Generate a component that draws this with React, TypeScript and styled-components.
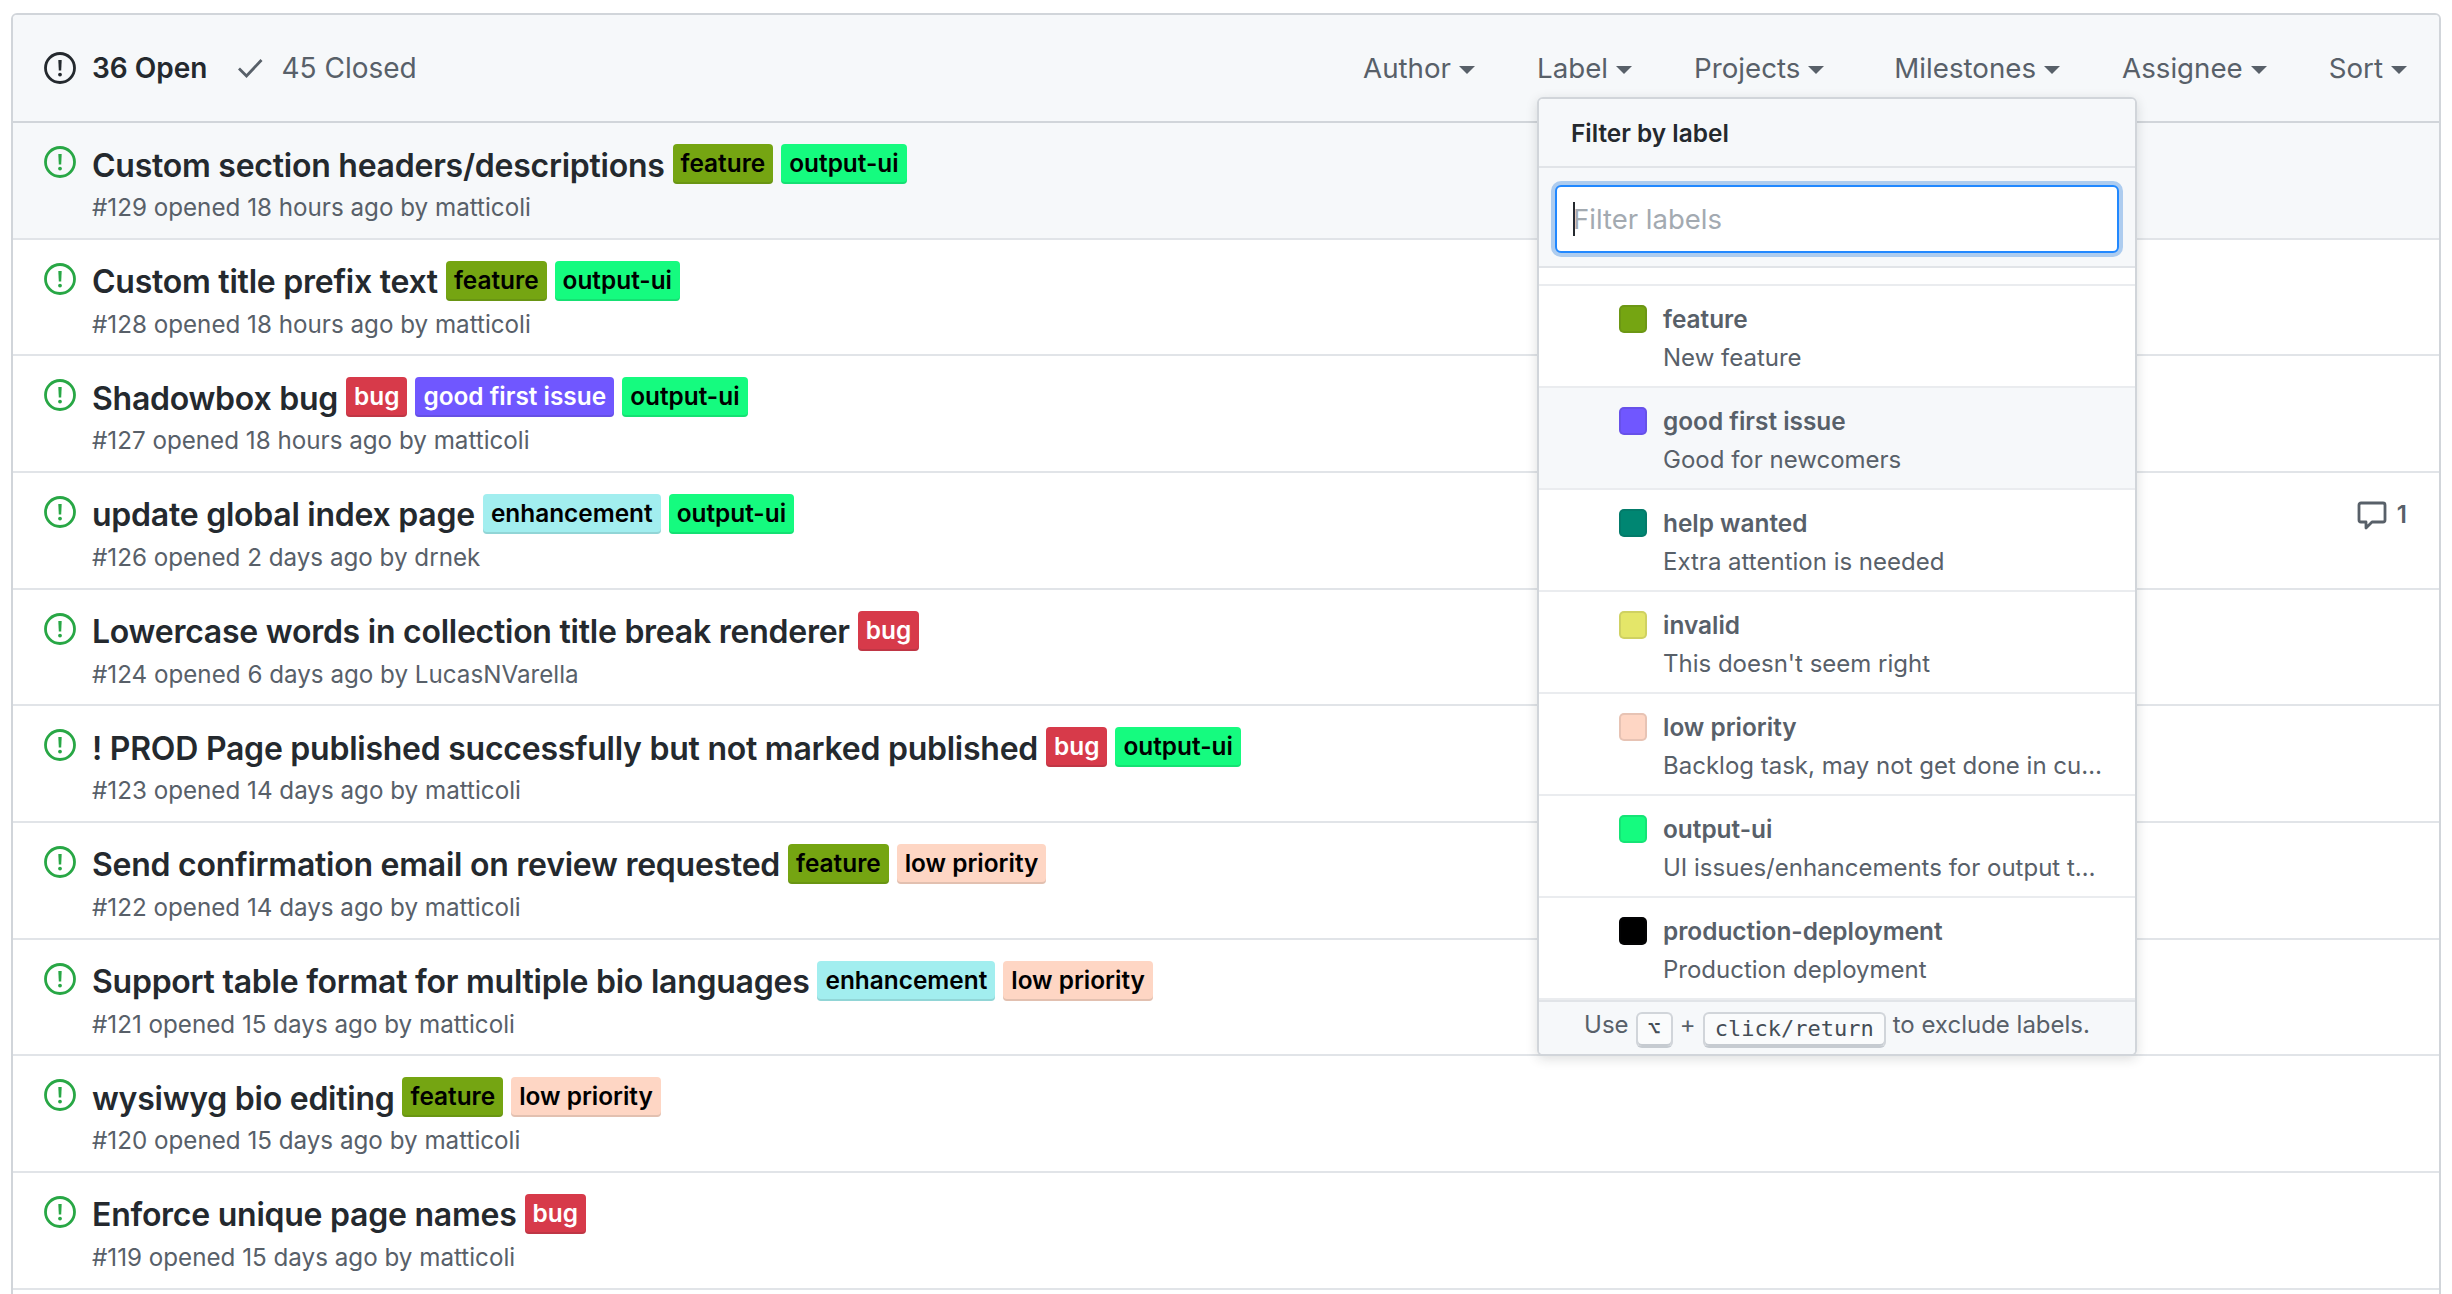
import React from "react";
import styled, { createGlobalStyle } from "styled-components";

const Global = createGlobalStyle`
  html, body { margin: 0; padding: 0; height: 1294px; overflow: hidden; background: #fff; }
  body { font-family: Inter, "Liberation Sans", sans-serif; color: #24292e; }
  #root { height: 100%; }
`;

const Page = styled.div`
  padding: 13px 11px 0;
  height: 100%;
  box-sizing: border-box;
`;

const Box = styled.div`
  position: relative;
  height: 1400px;
  border: 2px solid #d1d5da;
  border-radius: 6px 6px 0 0;
  box-sizing: border-box;
`;

const Header = styled.div`
  display: flex;
  align-items: center;
  justify-content: space-between;
  height: 106px;
  padding: 0 32px 0 31px;
  background: #f6f8fa;
  border-bottom: 2px solid #d1d5da;
  border-radius: 4px 4px 0 0;
  box-sizing: content-box;
`;

const States = styled.div`
  display: flex;
  align-items: center;
  font-size: 28px;
`;

const StateLink = styled.span<{ $active?: boolean }>`
  display: flex;
  align-items: center;
  font-weight: ${(p) => (p.$active ? 600 : 400)};
  color: ${(p) => (p.$active ? "#24292e" : "#586069")};
  margin-right: 30px;
  & svg { margin-right: 16px; }
`;

const Filters = styled.div`
  display: flex;
  align-items: center;
  gap: 62px;
  font-size: 27.7px;
  color: #586069;
`;

const Filter = styled.span<{ $extra?: boolean }>`
  display: flex;
  align-items: center;
  margin-left: ${(p) => (p.$extra ? "8px" : "0")};
`;

const Caret = styled.i`
  display: inline-block;
  width: 0;
  height: 0;
  margin-left: 8px;
  margin-top: 4px;
  border-style: solid;
  border-width: 8px 8px 0;
  border-color: #586069 transparent transparent;
`;

const Row = styled.div<{ $hover?: boolean }>`
  display: flex;
  height: 114.67px;
  border-bottom: 2px solid #e1e4e8;
  background: ${(p) => (p.$hover ? "#f6f8fa" : "#fff")};
  padding: 0 32px 0 31px;
  align-items: flex-start;
`;

const IssueIconWrap = styled.div`
  flex: none;
  width: 32px;
  margin-top: 23px;
  margin-right: 16px;
  line-height: 0;
`;

const RowMain = styled.div`
  flex: 1;
  min-width: 0;
  padding-top: 22px;
`;

const TitleLine = styled.div`
  display: flex;
  align-items: center;
  height: 40px;
`;

const Title = styled.span`
  font-size: 32px;
  font-weight: 600;
  letter-spacing: -0.25px;
  color: #24292e;
  margin-right: 8px;
  white-space: nowrap;
`;

const Tag = styled.span<{ $bg: string; $fg: string }>`
  display: inline-block;
  height: 40px;
  line-height: 38px;
  padding: 0 8px;
  margin-right: 8px;
  margin-top: -2px;
  font-size: 24.4px;
  font-weight: 600;
  border-radius: 4px;
  background: ${(p) => p.$bg};
  color: ${(p) => p.$fg};
  box-shadow: inset 0 -2px 0 rgba(27, 31, 35, 0.12);
  box-sizing: border-box;
`;

const Meta = styled.div`
  margin-top: 8px;
  font-size: 24.2px;
  line-height: 30px;
  color: #586069;
`;

const Comments = styled.div`
  flex: none;
  display: flex;
  align-items: center;
  gap: 10px;
  margin-top: 27px;
  font-size: 24px;
  font-weight: 600;
  color: #586069;
`;

const Menu = styled.div`
  position: absolute;
  left: 1524px;
  top: 82px;
  width: 600px;
  height: 959px;
  background: #fff;
  border: 2px solid #d1d5da;
  border-radius: 6px;
  box-shadow: 0 3px 12px rgba(27, 31, 35, 0.15);
  box-sizing: border-box;
  overflow: hidden;
  display: flex;
  flex-direction: column;
`;

const MenuHeader = styled.div`
  flex: none;
  height: 67px;
  display: flex;
  align-items: center;
  padding-left: 32px;
  font-size: 24.4px;
  font-weight: 600;
  color: #24292e;
  background: #f6f8fa;
  border-bottom: 2px solid #e1e4e8;
`;

const FilterArea = styled.div`
  flex: none;
  height: 81px;
  background: #f6f8fa;
  border-bottom: 2px solid #e1e4e8;
  padding: 17px 16px 0;
`;

const InputBox = styled.div`
  height: 68px;
  background: #fff;
  border: 2px solid #2188ff;
  border-radius: 6px;
  box-shadow: 0 0 0 4px rgba(3, 102, 214, 0.3);
  box-sizing: border-box;
  display: flex;
  align-items: center;
  padding-left: 16px;
  font-size: 27.5px;
  color: #a3aab1;
`;

const Cursor = styled.i`
  display: inline-block;
  width: 2px;
  height: 34px;
  background: #24292e;
  margin-right: -2px;
`;

const Spacer = styled.div`
  flex: none;
  height: 16px;
  border-bottom: 2px solid #eaecef;
`;

const LabelRow = styled.div<{ $hover?: boolean }>`
  flex: none;
  height: 81px;
  display: flex;
  padding-left: 80px;
  padding-top: 19px;
  border-bottom: 2px solid #eaecef;
  background: ${(p) => (p.$hover ? "#f6f8fa" : "#fff")};
  &:last-of-type { border-bottom: none; height: 80px; }
`;

const Swatch = styled.i<{ $color: string }>`
  flex: none;
  width: 28px;
  height: 28px;
  border-radius: 5px;
  background: ${(p) => p.$color};
  box-shadow: inset 0 0 0 2px rgba(27, 31, 35, 0.1);
  margin-right: 16px;
`;

const LabelText = styled.div`
  min-width: 0;
  width: 441px;
`;

const LabelName = styled.div`
  font-size: 24.4px;
  font-weight: 600;
  line-height: 28px;
  color: #586069;
`;

const LabelDesc = styled.div`
  margin-top: 11px;
  font-size: 24px;
  line-height: 28px;
  color: #586069;
  white-space: nowrap;
  overflow: hidden;
  text-overflow: ellipsis;
`;

const MenuFooter = styled.div`
  flex: 1;
  display: flex;
  align-items: flex-start;
  justify-content: center;
  gap: 7px;
  padding-top: 8px;
  font-size: 24px;
  line-height: 30px;
  color: #586069;
  background: #f6f8fa;
  border-top: 2px solid #e1e4e8;
`;

const Kbd = styled.kbd`
  display: inline-block;
  height: 32px;
  line-height: 30px;
  margin-top: 2px;
  padding: 0 10px;
  font-family: "DejaVu Sans Mono", "Liberation Mono", monospace;
  font-size: 22px;
  color: #444d56;
  background: #fafbfc;
  border: 2px solid #d1d5da;
  border-bottom-color: #c6cbd1;
  border-radius: 6px;
  box-shadow: inset 0 -2px 0 #c6cbd1;
  box-sizing: content-box;
`;

const IssueIcon = ({ color }: { color: string }) => (
  <svg width="32" height="32" viewBox="0 0 32 32">
    <circle cx="16" cy="16" r="14.5" fill="none" stroke={color} strokeWidth="2.8" />
    <path d="M14.3 8h3.4l-.5 10.5h-2.4z" fill={color} />
    <circle cx="16" cy="22.6" r="1.9" fill={color} />
  </svg>
);

const CheckIcon = () => (
  <svg width="28" height="24" viewBox="0 0 28 24" fill="none" stroke="#586069" strokeWidth="2.8">
    <path d="M2 12.5l7.5 7.5L24.5 4" />
  </svg>
);

const CommentIcon = () => (
  <svg width="30" height="30" viewBox="0 0 30 30" fill="none" stroke="#586069" strokeWidth="2.8" strokeLinejoin="round">
    <path d="M4 3h22a2 2 0 0 1 2 2v15a2 2 0 0 1-2 2H15l-6 6v-6H4a2 2 0 0 1-2-2V5a2 2 0 0 1 2-2z" />
  </svg>
);

const T = {
  feature: { bg: "#75a512", fg: "#000" },
  output: { bg: "#15fb7f", fg: "#000" },
  bug: { bg: "#d73a4a", fg: "#fff" },
  gfi: { bg: "#7057ff", fg: "#fff" },
  enh: { bg: "#a2eeef", fg: "#000" },
  low: { bg: "#fed6c4", fg: "#000" },
};

const NAME: Record<keyof typeof T, string> = {
  feature: "feature",
  output: "output-ui",
  bug: "bug",
  gfi: "good first issue",
  enh: "enhancement",
  low: "low priority",
};

const issues: { title: string; tags: (keyof typeof T)[]; meta: string; comments?: number }[] = [
  { title: "Custom section headers/descriptions", tags: ["feature", "output"], meta: "#129 opened 18 hours ago by matticoli" },
  { title: "Custom title prefix text", tags: ["feature", "output"], meta: "#128 opened 18 hours ago by matticoli" },
  { title: "Shadowbox bug", tags: ["bug", "gfi", "output"], meta: "#127 opened 18 hours ago by matticoli" },
  { title: "update global index page", tags: ["enh", "output"], meta: "#126 opened 2 days ago by drnek", comments: 1 },
  { title: "Lowercase words in collection title break renderer", tags: ["bug"], meta: "#124 opened 6 days ago by LucasNVarella" },
  { title: "! PROD Page published successfully but not marked published", tags: ["bug", "output"], meta: "#123 opened 14 days ago by matticoli" },
  { title: "Send confirmation email on review requested", tags: ["feature", "low"], meta: "#122 opened 14 days ago by matticoli" },
  { title: "Support table format for multiple bio languages", tags: ["enh", "low"], meta: "#121 opened 15 days ago by matticoli" },
  { title: "wysiwyg bio editing", tags: ["feature", "low"], meta: "#120 opened 15 days ago by matticoli" },
  { title: "Enforce unique page names", tags: ["bug"], meta: "#119 opened 15 days ago by matticoli" },
];

const labels = [
  { name: "feature", desc: "New feature", color: "#75a512" },
  { name: "good first issue", desc: "Good for newcomers", color: "#7057ff", hover: true },
  { name: "help wanted", desc: "Extra attention is needed", color: "#008672" },
  { name: "invalid", desc: "This doesn't seem right", color: "#e4e669" },
  { name: "low priority", desc: "Backlog task, may not get done in current release cycle", color: "#fed6c4" },
  { name: "output-ui", desc: "UI issues/enhancements for output themes and layouts", color: "#15fb7f" },
  { name: "production-deployment", desc: "Production deployment", color: "#000000" },
];

export default function App() {
  return (
    <>
      <Global />
      <Page>
        <Box>
          <Header>
            <States>
              <StateLink $active>
                <IssueIcon color="#24292e" />
                36 Open
              </StateLink>
              <StateLink>
                <CheckIcon />
                45 Closed
              </StateLink>
            </States>
            <Filters>
              {["Author", "Label", "Projects", "Milestones", "Assignee", "Sort"].map((f) => (
                <Filter key={f} $extra={f === "Milestones"}>
                  {f}
                  <Caret />
                </Filter>
              ))}
            </Filters>
          </Header>
          {issues.map((it, i) => (
            <Row key={it.meta} $hover={i === 0}>
              <IssueIconWrap>
                <IssueIcon color="#28a745" />
              </IssueIconWrap>
              <RowMain>
                <TitleLine>
                  <Title>{it.title}</Title>
                  {it.tags.map((t) => (
                    <Tag key={t} $bg={T[t].bg} $fg={T[t].fg}>
                      {NAME[t]}
                    </Tag>
                  ))}
                </TitleLine>
                <Meta>{it.meta}</Meta>
              </RowMain>
              {it.comments ? (
                <Comments>
                  <CommentIcon />
                  {it.comments}
                </Comments>
              ) : null}
            </Row>
          ))}
          <Menu>
            <MenuHeader>Filter by label</MenuHeader>
            <FilterArea>
              <InputBox>
                <Cursor />
                Filter labels
              </InputBox>
            </FilterArea>
            <Spacer />
            {labels.map((l) => (
              <LabelRow key={l.name} $hover={l.hover}>
                <Swatch $color={l.color} />
                <LabelText>
                  <LabelName>{l.name}</LabelName>
                  <LabelDesc>{l.desc}</LabelDesc>
                </LabelText>
              </LabelRow>
            ))}
            <MenuFooter>
              Use <Kbd>⌥</Kbd> + <Kbd>click/return</Kbd> to exclude labels.
            </MenuFooter>
          </Menu>
        </Box>
      </Page>
    </>
  );
}
